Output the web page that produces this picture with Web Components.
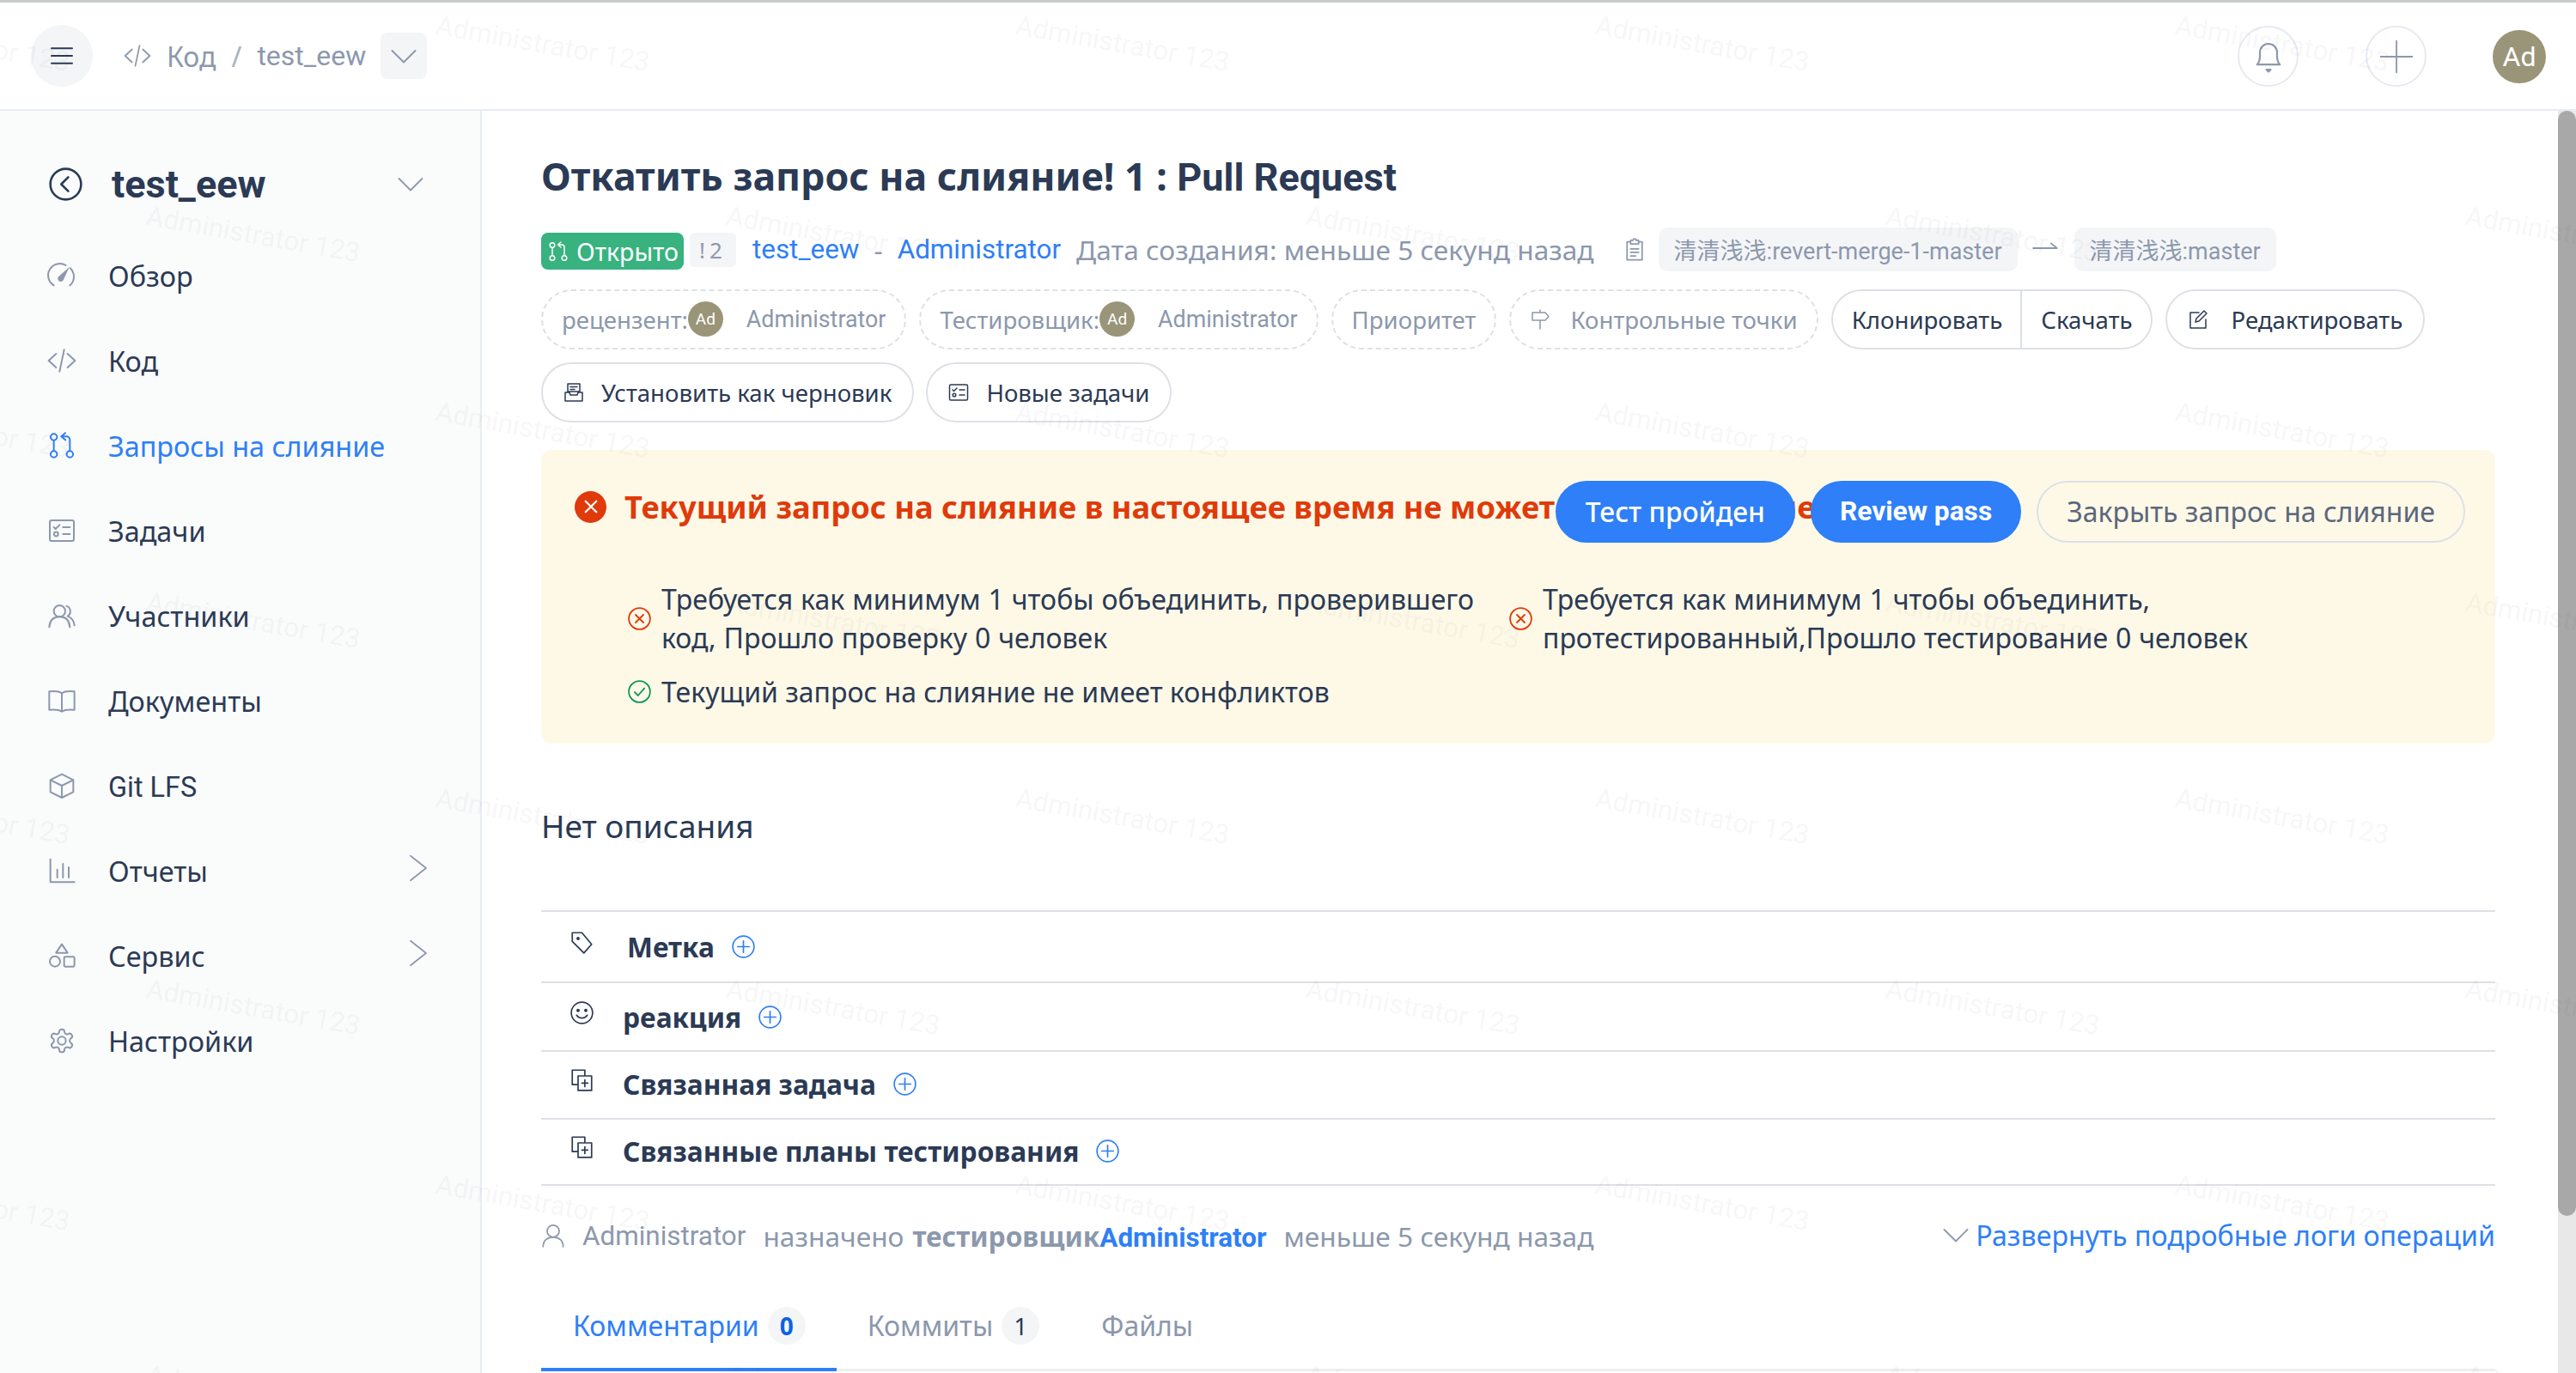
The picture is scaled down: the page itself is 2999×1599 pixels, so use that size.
<!DOCTYPE html>
<html lang="ru">
<head>
<meta charset="utf-8">
<title>Pull Request</title>
<style>
  html, body { margin: 0; padding: 0; height: 100%; overflow: hidden; background: #fff; }
  body { font-family: "Noto Sans", "Noto Sans CJK SC", sans-serif; color: #2b3a55; }
</style>
</head>
<body>
<app-shell>
  <top-bar slot="top"></top-bar>
  <side-nav slot="side">
    <nav-item icon="gauge">Обзор</nav-item>
    <nav-item icon="code">Код</nav-item>
    <nav-item icon="merge" active>Запросы на слияние</nav-item>
    <nav-item icon="tasks">Задачи</nav-item>
    <nav-item icon="users">Участники</nav-item>
    <nav-item icon="book">Документы</nav-item>
    <nav-item icon="box"><l-t>Git LFS</l-t></nav-item>
    <nav-item icon="chart" more>Отчеты</nav-item>
    <nav-item icon="shapes" more>Сервис</nav-item>
    <nav-item icon="gear">Настройки</nav-item>
  </side-nav>
  <mr-page slot="main"></mr-page>
</app-shell>
<water-mark></water-mark>

<script>
const ICONS = {
  menu: '<path d="M3 5.500h18M3 12h18M3 18.500h18"/>',
  code: '<path d="M7 6 .5 12 7 18M17 6l6.500 6L17 18M14 2.500l-4 19"/>',
  down: '<path d="m3 8 9 9 9-9"/>',
  right: '<path d="m6 2.500 12 9.500-12 9.500"/>',
  back: '<circle cx="12" cy="12" r="11"/><path d="m13.800 7-5 5 5 5"/>',
  gauge: '<path d="M5 20.500A10 10 0 0 1 15.500 3M19.200 5.500A10 10 0 0 1 19 20.500"/><path d="m18.500 4.500-5 11a2.600 2.600 0 1 1-4-3z" fill="currentColor" stroke="none"/>',
  merge: '<circle cx="5" cy="4.500" r="2.800"/><circle cx="5" cy="19.500" r="2.800"/><circle cx="19" cy="19.500" r="2.800"/><path d="M5 7.500v9M19 16.500V7a3 3 0 0 0-3-3h-4M15 1l-3.500 3 3.500 3"/>',
  tasks: '<rect x="1.500" y="3" width="21" height="18" rx="1.500"/><path d="m5 9 1.500 1.500L10 7M13 9h6M13 15h6"/><circle cx="7" cy="15" r="1.800"/>',
  users: '<circle cx="10" cy="8" r="5"/><path d="M1 22c.5-6 4-9 9-9s8.500 3 9 9M16 3.500a5 5 0 0 1 1 9c3 1 5.500 4 6 8"/>',
  book: '<path d="M12 5.500C10 4 6 3.500 1 4v16c5-.500 9 0 11 1.500C14 20 18 19.500 23 20V4c-5-.500-9 0-11 1.500zM12 5.500v16"/>',
  box: '<path d="m12 2 10 5v10.500L12 22.500 2 17.500V7zM2 7l10 5 10-5M12 12v10.500"/>',
  chart: '<path d="M2 2v20h21M8 18v-7M13 18V6M18 18V9"/>',
  shapes: '<path d="m12 2 5 7.500H7z"/><circle cx="6" cy="17" r="4.500"/><rect x="14" y="13" width="9" height="8.500" rx="1"/>',
  gear: '<path d="M12.220 2h-.44a2 2 0 0 0-2 2v.18a2 2 0 0 1-1 1.730l-.43.250a2 2 0 0 1-2 0l-.15-.08a2 2 0 0 0-2.730.730l-.22.380a2 2 0 0 0 .73 2.730l.15.100a2 2 0 0 1 1 1.720v.510a2 2 0 0 1-1 1.740l-.15.090a2 2 0 0 0-.73 2.730l.22.380a2 2 0 0 0 2.730.730l.15-.08a2 2 0 0 1 2 0l.43.250a2 2 0 0 1 1 1.730V20a2 2 0 0 0 2 2h.44a2 2 0 0 0 2-2v-.18a2 2 0 0 1 1-1.730l.43-.25a2 2 0 0 1 2 0l.15.080a2 2 0 0 0 2.730-.73l.22-.39a2 2 0 0 0-.73-2.730l-.15-.08a2 2 0 0 1-1-1.740v-.5a2 2 0 0 1 1-1.740l.15-.09a2 2 0 0 0 .73-2.730l-.22-.38a2 2 0 0 0-2.730-.73l-.15.080a2 2 0 0 1-2 0l-.43-.25a2 2 0 0 1-1-1.730V4a2 2 0 0 0-2-2z"/><circle cx="12" cy="12" r="3.500"/>',
  bell: '<path d="M4 17.500c1.500-1.500 2-3 2-6V9a6 6 0 0 1 12 0v2.500c0 3 .5 4.500 2 6z"/><path d="M10.500 21h3l-1.500 1.500z" fill="currentColor"/>',
  plus: '<path d="M12 1v22M1 12h22"/>',
  clip: '<path d="M8 4H4.500v18h15V4H16M8 2.500h2.500a1.500 1.500 0 0 1 3 0H16V6H8zM8 11h8M8 14.500h8M8 18h5"/>',
  draft: '<path d="M5 2h14v9H5zM8 5.500h8M8 8.500h5M2 12v10h20V12h-5l-1 3H8l-1-3z"/>',
  sign: '<path d="M12 1v3M12 13v10M3 4h15l4 4.500-4 4.500H3z"/>',
  edit: '<path d="M21 12v10H3V4h10M9 15l1-4L19 2l3 3-9 9z"/>',
  arrow: '<path d="M1 12h22M17.500 7.500 23 12"/>',
  cross: '<circle cx="12" cy="12" r="11"/><path d="m8 8 8 8M16 8l-8 8"/>',
  x: '<path d="m7 7 10 10M17 7 7 17"/>',
  ok: '<circle cx="12" cy="12" r="11"/><path d="m7 12.500 3.500 3.500L17 8.500"/>',
  tag: '<path d="M2 2h10l10 12-8 9L2 11z"/><circle cx="8" cy="8" r="1" fill="currentColor"/>',
  smile: '<circle cx="12" cy="12" r="11"/><circle cx="8" cy="9.500" r="1" fill="currentColor"/><circle cx="16" cy="9.500" r="1" fill="currentColor"/><path d="M6.500 14.500c2.500 4 8.500 4 11 0"/>',
  link: '<path d="M8 17H2V2h13v6M8 8h14v15H8zM12 15.500h6M15 12v7"/>',
  add: '<circle cx="12" cy="12" r="11"/><path d="M12 6v12M6 12h12"/>',
  user: '<circle cx="12" cy="7.500" r="6"/><path d="M2 23c0-6 4-9.500 10-9.500S22 17 22 23"/>'
}

// small helper, every element gets an open shadow root with its own styles
class Base extends HTMLElement {
  constructor () {
    super()
    this.attachShadow({ mode: 'open' })
    this.shadowRoot.innerHTML = `<style>${this.constructor.css}</style>${this.render()}`
  }
  render () { return '<slot></slot>' }
}

// latin runs are set in a narrower face than the cyrillic ones
class LatinText extends Base {
  static css = ':host { display: inline; font-family: Roboto, "Noto Sans CJK SC", sans-serif; }'
}
customElements.define('l-t', LatinText)

class XIcon extends HTMLElement {
  constructor () {
    super()
    this.attachShadow({ mode: 'open' })
    const name = this.getAttribute('name')
    const w = this.getAttribute('w') || 1.5
    this.shadowRoot.innerHTML = `<style>
      :host { display: inline-flex; flex: none; width: ${this.getAttribute('size') || 32}px; height: ${this.getAttribute('size') || 32}px; }
      svg { width: 100%; height: 100%; display: block; overflow: visible; }
    </style><svg viewBox="0 0 24 24" fill="none" stroke="currentColor" stroke-width="${w}" stroke-linecap="round" stroke-linejoin="round">${ICONS[name] || ''}</svg>`
  }
}
customElements.define('x-icon', XIcon)

class AppShell extends Base {
  static css = `
    :host { display: grid; grid-template-columns: 561px 1fr; grid-template-rows: 129px 1fr; width: 2999px; height: 1599px; overflow: hidden; box-sizing: border-box; }
    ::slotted([slot=top]) { grid-column: 1 / 3; }
  `
  render () { return '<slot name="top"></slot><slot name="side"></slot><slot name="main"></slot>' }
}
customElements.define('app-shell', AppShell)

class TopBar extends Base {
  static css = `
    :host { display: flex; align-items: center; box-sizing: border-box; height: 129px; padding: 3px 35px 0 36px; border-bottom: 2px solid #e8edf2; position: relative; background: #fff; }
    :host::before { content: ""; position: absolute; left: 0; right: 0; top: 0; height: 3px; background: #c8ccc8; }
    .burger { width: 72px; height: 72px; border-radius: 50%; background: #f4f5f7; display: flex; align-items: center; justify-content: center; color: #2b3a55; }
    .crumbs { display: flex; align-items: center; margin-left: 37px; font-size: 32px; color: #8c98ad; }
    .crumbs x-icon { margin-right: 19px; }
    .sep { margin: 0 18px; color: #a9b2c2; }
    .drop { width: 54px; height: 54px; border-radius: 8px; background: #f4f5f7; margin-left: 17px; display: flex; align-items: center; justify-content: center; }
    .drop x-icon { margin: 0; }
    .right { margin-left: auto; display: flex; align-items: center; margin-top: 1px; }
    .circle { width: 71px; height: 71px; box-sizing: border-box; border: 2px solid #e5eaf0; border-radius: 50%; display: flex; align-items: center; justify-content: center; color: #8c98ad; margin-right: 78px; }
    .avatar { width: 62px; height: 62px; border-radius: 50%; background: #9a9578; color: #fff; font-size: 32px; font-family: Roboto, sans-serif; display: flex; align-items: center; justify-content: center; }
  `
  render () {
    return `
      <div class="burger"><x-icon name="menu" size="32" w="1.500"></x-icon></div>
      <div class="crumbs">
        <x-icon name="code" size="30" w="1.400"></x-icon><span>Код</span><span class="sep">/</span><l-t>test_eew</l-t>
        <div class="drop"><x-icon name="down" size="36" w="1.300"></x-icon></div>
      </div>
      <div class="right">
        <div class="circle"><x-icon name="bell" size="40" w="1.300"></x-icon></div>
        <div class="circle" style="margin-right:77px"><x-icon name="plus" size="40" w="1.100"></x-icon></div>
        <div class="avatar">Ad</div>
      </div>`
  }
}
customElements.define('top-bar', TopBar)

class SideNav extends Base {
  static css = `
    :host { display: block; background: #fafbfb; border-right: 2px solid #e8edf2; box-sizing: border-box; height: 100%; padding-top: 54px; }
    .head { display: flex; align-items: center; height: 62px; padding: 0 63px 0 57px; margin-bottom: 26px; }
    .name { font-size: 45px; font-weight: 700; margin-left: 34px; flex: 1; font-family: Roboto, sans-serif; }
    .chev { color: #8c98ad; }
    .back { color: #2b3a55; }
  `
  render () {
    return `<div class="head">
        <x-icon class="back" name="back" size="39" w="1.600"></x-icon>
        <span class="name">test_eew</span>
        <x-icon class="chev" name="down" size="36" w="1.200"></x-icon>
      </div><slot></slot>`
  }
}
customElements.define('side-nav', SideNav)

class NavItem extends Base {
  static css = `
    :host { display: flex; align-items: center; height: 99px; padding: 0 54px 0 56px; font-size: 32.400px; color: #2b3a55; }
    :host([active]) { color: #2e7ff8; }
    .ic { color: #8c98ad; margin-right: 38px; }
    :host([active]) .ic { color: #2e7ff8; }
    .label { flex: 1; }
    .more { color: #8c98ad; display: none; margin-top: -6px; }
    :host([more]) .more { display: inline-flex; }
  `
  render () {
    return `<x-icon class="ic" name="${this.getAttribute('icon')}" size="32"></x-icon>
      <span class="label"><slot></slot></span>
      <x-icon class="more" name="right" size="36" w="1.200"></x-icon>`
  }
}
customElements.define('nav-item', NavItem)

class PillBtn extends Base {
  static css = `
    :host { display: inline-flex; align-items: center; box-sizing: border-box; height: 70px; padding: 0 24px; border: 2px solid #dde1e6; border-radius: 36px; font-size: 27.600px; color: #2b3a55; white-space: nowrap; flex: none; }
    :host([dashed]) { border-style: dashed; color: #8c98ad; padding: 0 22px; }
    :host([primary]) { background: #2e7ff8; border-color: #2e7ff8; color: #fff; font-weight: 500; height: 72px; font-size: 31.700px; padding: 0 33px; }
    :host([plain]) { color: #5b677d; height: 72px; font-size: 32px; padding: 0 33px; background: transparent; }
    ::slotted(x-icon) { margin-right: 20px; }
  `
}
customElements.define('pill-btn', PillBtn)

class UserChip extends Base {
  static css = `
    :host { display: inline-flex; align-items: center; font-family: Roboto, sans-serif; font-size: 26.800px; }
    .a { width: 41px; height: 41px; border-radius: 50%; background: #9a9578; color: #fff; font-size: 19px; display: flex; align-items: center; justify-content: center; margin: 0 27px 0 0; }
  `
  render () { return '<span class="a">Ad</span><slot></slot>' }
}
customElements.define('user-chip', UserChip)

class CheckLine extends Base {
  static css = `
    :host { display: flex; align-items: center; font-size: 32px; line-height: 45px; color: #2b3a55; word-spacing: .6px; }
    x-icon { margin-right: 12px; color: #e03a0a; }
    :host([ok]) x-icon { color: #12945f; }
    :host([ok]) { word-spacing: 0; }
    .t { max-width: 960px; }
  `
  render () { return `<x-icon name="${this.hasAttribute('ok') ? 'ok' : 'cross'}" size="27" w="1.600"></x-icon><div class="t"><slot></slot></div>` }
}
customElements.define('check-line', CheckLine)

class MergeAlert extends Base {
  static css = `
    :host { display: block; box-sizing: border-box; height: 342px; margin-top: 32px; padding: 36px 35px 0 39px; background: #fef9e7; border-radius: 12px; }
    .head { display: flex; align-items: center; height: 72px; }
    .title { display: flex; align-items: center; flex: 1; min-width: 0; white-space: pre; font-size: 36.240px; font-weight: 700; color: #e03a0a; margin-top: -12px; }
    .title .tail { word-spacing: 4.500px; }
    .badge { width: 37px; height: 37px; flex: none; border-radius: 50%; background: #e03a0a; color: #fff; margin-right: 21px; display: flex; align-items: center; justify-content: center; }
    .actions { display: flex; gap: 18px; flex: none; margin-top: -1px; }
    .rp { font-family: Roboto, sans-serif; font-weight: 700; padding: 0 32px; }
    .grid { display: grid; grid-template-columns: 1026px 1fr; row-gap: 18px; margin: 43px 0 0 62px; }
  `
  render () {
    return `<div class="head">
        <div class="title"><span class="badge"><x-icon name="x" size="30" w="1.800"></x-icon></span><span>Текущий запрос на слияние в настоящее время не может<span class="tail"> быть объединен</span></span></div>
        <div class="actions">
          <pill-btn primary>Тест пройден</pill-btn>
          <pill-btn primary class="rp">Review pass</pill-btn>
          <pill-btn plain>Закрыть запрос на слияние</pill-btn>
        </div>
      </div>
      <div class="grid">
        <check-line>Требуется как минимум 1 чтобы объединить, проверившего код, Прошло проверку 0 человек</check-line>
        <check-line>Требуется как минимум 1 чтобы объединить, протестированный,Прошло тестирование 0 человек</check-line>
        <check-line ok>Текущий запрос на слияние не имеет конфликтов</check-line>
      </div>`
  }
}
customElements.define('merge-alert', MergeAlert)

class MetaRow extends Base {
  static css = `
    :host { display: flex; align-items: center; box-sizing: border-box; border-top: 2px solid #dde1e6; padding-left: 34px; font-size: 31.700px; font-weight: 700; color: #2b3a55; height: var(--h, 80px); padding-bottom: var(--pb, 0); }
    :host([last]) { border-bottom: 2px solid #dde1e6; }
    .i { margin-right: 34px; margin-top: -10px; }
    :host([tag]) .l { margin-left: 5px; }
    .p { color: #2e7ff8; margin-left: 20px; }
  `
  render () {
    return `<x-icon class="i" name="${this.getAttribute('icon')}" size="27"></x-icon>
      <span class="l"><slot></slot></span>
      <x-icon class="p" name="add" size="27"></x-icon>`
  }
}
customElements.define('meta-row', MetaRow)

class ActivityLine extends Base {
  static css = `
    :host { display: flex; align-items: center; height: 60px; margin-top: 28px; font-size: 31.700px; color: #8c98ad; white-space: nowrap; }
    x-icon { margin-right: 20px; }
    l-t { font-size: 31.400px; }
    .sp { margin-left: 20px; }
    b { margin-left: 10px; font-weight: 700; }
    b span { color: #2e7ff8; font-family: Roboto, sans-serif; font-size: 31.400px; }
    .exp { margin-left: auto; color: #2e7ff8; display: flex; align-items: center; margin-top: -2px; font-size: 32.200px; }
    .exp x-icon { color: #8c98ad; margin: 0 5px 0 0; }
  `
  render () {
    return `<x-icon name="user" size="28"></x-icon><l-t>Administrator</l-t><span class="sp">назначено</span><b>тестировщик<span>Administrator</span></b><span class="sp">меньше 5 секунд назад</span>
      <div class="exp"><x-icon name="down" size="36" w="1.200"></x-icon>Развернуть подробные логи операций</div>`
  }
}
customElements.define('activity-line', ActivityLine)

class TabBar extends Base {
  static css = `
    :host { display: flex; align-items: center; box-sizing: border-box; height: 104px; margin-top: 24px; border-bottom: 3px solid #eceef1; font-size: 32px; color: #8c98ad; position: relative; }
    .tab { display: flex; align-items: center; height: 100%; box-sizing: border-box; padding: 0 36px 0 37px; position: relative; }
    .tab.on { color: #2e7ff8; }
    .tab.on::after { content: ""; position: absolute; left: 0; right: 0; bottom: -3px; height: 4px; background: #2e7ff8; }
    .n { width: 44px; height: 44px; border-radius: 50%; background: #f4f5f7; color: #2b3a55; margin-left: 10px; display: flex; align-items: center; justify-content: center; font-size: 28px; }
    .on .n { color: #0a62e6; font-weight: 700; }
    .tab + .tab { padding-left: 36px; padding-right: 36px; }
  `
  render () {
    return `<div class="tab on">Комментарии<span class="n">0</span></div>
      <div class="tab">Коммиты<span class="n">1</span></div>
      <div class="tab">Файлы</div>`
  }
}
customElements.define('tab-bar', TabBar)

class MrPage extends Base {
  static css = `
    :host { display: flex; overflow: hidden; height: 100%; background: #fff; }
    .col { flex: 1; min-width: 0; padding: 38px 73px 0 69px; box-sizing: border-box; }
    h1 { margin: 0; font-size: 44.700px; line-height: 76px; font-weight: 700; height: 76px; white-space: nowrap; }
    h1 l-t { font-size: 45px; }
    .row { display: flex; align-items: center; white-space: nowrap; }
    .info { height: 51px; margin-top: 22px; margin-bottom: 2px; font-size: 31.700px; color: #8c98ad; }
    .open { display: flex; align-items: center; height: 43px; width: 166px; box-sizing: border-box; padding-left: 8px; background: #38b27f; color: #fff; border-radius: 8px; font-size: 28.500px; margin-top: 4px; }
    .open x-icon { margin-right: 9px; }
    .num { width: 54px; height: 40px; margin-left: 7px; border-radius: 6px; background: #f4f5f7; font-size: 26px; display: flex; align-items: center; justify-content: center; letter-spacing: 5px; }
    .lnk { color: #2e7ff8; font-family: Roboto, sans-serif; font-size: 31.400px; }
    .ref { height: 51px; border-radius: 10px; background: #f4f5f7; font-size: 27px; padding: 0 18px; display: flex; align-items: center; font-family: Roboto, "Noto Sans CJK SC", sans-serif; }
    .acts { gap: 15px; margin-top: 20px; height: 71px; }
    .acts2 { gap: 14px; margin-top: 15px; height: 70px; }
    .split { display: inline-flex; align-items: stretch; height: 70px; box-sizing: border-box; border: 2px solid #dde1e6; border-radius: 36px; font-size: 27.600px; color: #2b3a55; }
    .split span { display: flex; align-items: center; padding: 0 21px 0 22px; }
    .split span + span { border-left: 2px solid #dde1e6; }
    .desc { font-size: 37px; height: 194px; display: flex; align-items: flex-start; }
    .desc span { margin-top: 71px; line-height: 50px; }
    .bar { width: 21px; flex: none; background: #e8e8e8; position: relative; }
    .thumb { position: absolute; left: 0; right: 0; top: 0; height: 1287px; background: #a8a8a8; border-radius: 11px; }
  `
  render () {
    return `<div class="col">
        <h1>Откатить запрос на слияние! 1 : <l-t>Pull Request</l-t></h1>
        <div class="row info">
          <span class="open"><x-icon name="merge" size="24"></x-icon>Открыто</span>
          <span class="num">!2</span>
          <span class="lnk" style="margin-left:19px">test_eew</span>
          <span style="margin:0 17px">-</span>
          <span class="lnk">Administrator</span>
          <span style="margin-left:18px">Дата создания: меньше 5 секунд назад</span>
          <x-icon name="clip" size="28" style="margin:0 14px 0 33px"></x-icon>
          <span class="ref">清清浅浅:revert-merge-1-master</span>
          <x-icon name="arrow" size="30" style="margin:-4px 19px 0 17px"></x-icon>
          <span class="ref">清清浅浅:master</span>
        </div>
        <div class="row acts">
          <pill-btn dashed>рецензент:<user-chip>Administrator</user-chip></pill-btn>
          <pill-btn dashed>Тестировщик:<user-chip>Administrator</user-chip></pill-btn>
          <pill-btn dashed>Приоритет</pill-btn>
          <pill-btn dashed><x-icon name="sign" size="24" style="margin-right:23px"></x-icon>Контрольные точки</pill-btn>
          <div class="split"><span>Клонировать</span><span>Скачать</span></div>
          <pill-btn><x-icon name="edit" size="24" style="margin-right:27px"></x-icon>Редактировать</pill-btn>
        </div>
        <div class="row acts2">
          <pill-btn><x-icon name="draft" size="24"></x-icon>Установить как черновик</pill-btn>
          <pill-btn><x-icon name="tasks" size="24"></x-icon>Новые задачи</pill-btn>
        </div>
        <merge-alert></merge-alert>
        <div class="desc"><span>Нет описания</span></div>
        <meta-row icon="tag" tag style="--h:83px">Метка</meta-row>
        <meta-row icon="smile" style="--h:80px">реакция</meta-row>
        <meta-row icon="link" style="--h:79px;--pb:3px">Связанная задача</meta-row>
        <meta-row icon="link" last style="--h:79px;--pb:3px">Связанные планы тестирования</meta-row>
        <activity-line></activity-line>
        <tab-bar></tab-bar>
      </div>
      <div class="bar"><div class="thumb"></div></div>`
  }
}
customElements.define('mr-page', MrPage)

// the tiled "Administrator 123" watermark lies over the whole page
class WaterMark extends HTMLElement {
  constructor () {
    super()
    this.attachShadow({ mode: 'open' })
    let marks = ''
    for (let row = 0; row < 4; row++) {
      for (let col = -1; col < 5; col++) {
        marks += `<span style="left:${511 + col * 675}px;top:${11 + row * 450}px">Administrator 123</span>`
        marks += `<span style="left:${174 + col * 675}px;top:${233 + row * 450}px">Administrator 123</span>`
      }
    }
    this.shadowRoot.innerHTML = `<style>
      :host { position: fixed; inset: 0; overflow: hidden; pointer-events: none; display: block; }
      span { position: absolute; font-family: Roboto, sans-serif; font-size: 31.500px; line-height: 38px; white-space: nowrap; color: rgba(40, 50, 70, .04); transform: rotate(10deg); transform-origin: 0 0; }
    </style>${marks}`
  }
}
customElements.define('water-mark', WaterMark)
</script>
</body>
</html>
